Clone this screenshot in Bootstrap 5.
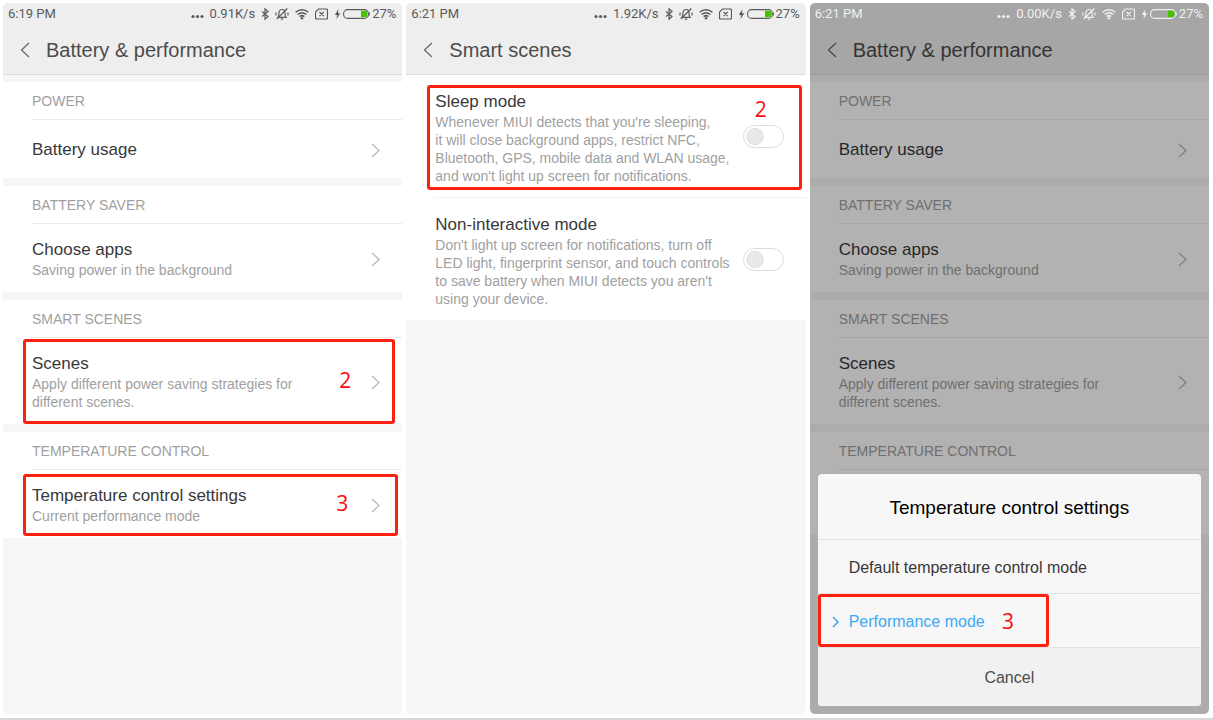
<!DOCTYPE html>
<html lang="en">
<head>
<meta charset="utf-8">
<meta name="viewport" content="width=device-width, initial-scale=1">
<title>Battery &amp; performance</title>
<link rel="stylesheet" href="https://cdn.jsdelivr.net/npm/bootstrap@5.3.0/dist/css/bootstrap.min.css">
<style>
body { font-family: "Liberation Sans", Arial, sans-serif; font-size: 14px; line-height: 18px; color: #9f9f9f; background: #fff; }
.screens { padding: 3px 4px 4px 3px; }
.page-edge { height: 2px; background: #d9d9d9; }
.phone { flex: 1 1 0; min-width: 0; background: #f6f6f6; border-radius: 5px; overflow: hidden; }
.topbar { background: #eee; border-bottom: 1px solid #dcdcdc; height: 72px; }
.statusbar { font-family: Roboto, sans-serif; font-size: 13px; line-height: 22px; color: #5a5a5a; padding: 0 6px 0 5px; }
.status-icons { gap: 6px; }
.status-icons svg { display: block; }
.charge { gap: 2px; }
.titlebar { padding: 11px 0 0 17px; }
.titlebar h1 { font-size: 20px; line-height: 28px; color: #4c4c4c; margin: 0 0 0 16px; font-weight: 400; }
.back-btn { border: 0; background: none; padding: 0; color: #6a6a6a; line-height: 0; }
.groups { padding-top: 7px; }
.group { background: #fff; margin-bottom: 8px; }
.group-label { font-size: 14px; font-weight: 400; line-height: 37px; margin: 0 0 0 28px; padding: 1px 0 0 1px; height: 38px; border-bottom: 1px solid #ebebeb; color: #9f9f9f; }
.setting { padding: 15px 22px 13px 29px; min-height: 58px; color: inherit; }
.scene { padding: 16px 22px 12px 29px; background: #fff; }
.scene-line { border-top: 1px solid #f1f1f1; margin-left: 29px; }
.item-title { font-size: 17px; line-height: 22px; color: #383838; display: block; }
.chev { color: #b9b9b9; flex: none; }
.toggle.form-check-input { width: 41px; height: 23px; margin: 0 0 4px; flex: none; border: 1px solid #dcdcdc; background-color: #fff; border-radius: 12px;
  background-image: radial-gradient(circle at 11px 50%, #e9e9e9 7px, #dcdcdc 8px, transparent 9px); background-size: 100% 100%; background-position: 0 0; }
.callout { position: absolute; border: 3px solid #fc2010; border-radius: 3px; pointer-events: none; z-index: 4;
  display: flex; justify-content: flex-end; align-items: center; color: #fb0d0d; font: 21px/28px "Open Sans", sans-serif; }
.callout-scenes { inset: 1px 7px 0 20px; padding: 0 41px 4px 0; }
.callout-temp { inset: 4px 4px 2px 20px; padding: 0 47px 4px 0; }
.callout-sleep { inset: 10px 4px 7px 21px; padding: 7px 32px 0 0; align-items: flex-start; }
.callout-perf { inset: 1px 152px 0 0; padding-right: 32px; }
.dimmed .shade { position: absolute; inset: 0; background: rgba(0,0,0,.3); z-index: 1; }
.dimmed .statusbar { position: relative; z-index: 2; color: #f0f0f0; }
.dialog { position: absolute; left: 8px; right: 8px; bottom: 8px; z-index: 3; background: #f7f7f7; border-radius: 4px; }
.dialog h2 { font-size: 19px; line-height: 24px; color: #000; font-weight: 400; margin: 0; padding: 22px 0 19px; text-align: center; }
.choice { display: block; width: 100%; border: 0; border-top: 1px solid #e3e3e3; background: none; font-size: 16px; line-height: 24px; padding: 16px 0 13px 31px; color: #383838; text-align: left; }
.choice.chosen { color: #3ea9f5; padding-left: 14px; display: flex; gap: 9px; align-items: center; }
.choice.cancel { text-align: center; padding: 18px 0 16px; background: #f1f1f1; color: #4c4c4c; border-radius: 0 0 4px 4px; }
</style>
</head>
<body>
<svg width="0" height="0" class="position-absolute" aria-hidden="true">
  <symbol id="i-right" viewBox="0 0 9 15"><path d="M1 1l7 6.500-7 6.500" fill="none" stroke="currentColor" stroke-width="1.300"/></symbol>
  <symbol id="i-left" viewBox="0 0 10 16"><path d="M9 1L1.500 8 9 15" fill="none" stroke="currentColor" stroke-width="1.300"/></symbol>
  <symbol id="i-dots" viewBox="0 0 13 12"><g fill="currentColor"><circle cx="2" cy="8.500" r="1.600"/><circle cx="6.500" cy="8.500" r="1.600"/><circle cx="11" cy="8.500" r="1.600"/></g></symbol>
  <symbol id="i-bt" viewBox="0 0 8 12"><path d="M1 3.500l6 5-3 2.700V.8L7 3.500l-6 5" fill="none" stroke="currentColor" stroke-width="1.200"/></symbol>
  <symbol id="i-mute" viewBox="0 0 14 12"><g fill="none" stroke="currentColor" stroke-width="1.200"><path d="M3 9.300h8c-1-1-1-2-1-4.300C10 3 9 1.500 7 1.500S4 3 4 5c0 2.300 0 3.300-1 4.300zM5.800 11.200h2.400M12.300 .5L1.800 11.200M1 4.500v3M13 4.500v3"/></g></symbol>
  <symbol id="i-wifi" viewBox="0 0 14 12"><g fill="none" stroke="currentColor" stroke-width="1.500"><path d="M.6 4.300c3.700-3.300 9.100-3.300 12.800 0M2.700 6.500c2.500-2.200 6.100-2.200 8.600 0M4.700 8.600c1.400-1.200 3.200-1.200 4.600 0"/></g><circle cx="7" cy="10.300" r="1.200" fill="currentColor"/></symbol>
  <symbol id="i-sim" viewBox="0 0 13 12"><path d="M3.500 1h8q1 0 1 1v8q0 1-1 1h-10q-1 0-1-1V4zM4.500 4l4.200 4.200M8.700 4L4.500 8.200" fill="none" stroke="currentColor" stroke-width="1.200"/></symbol>
  <symbol id="i-bolt" viewBox="0 0 7 12"><path d="M4.500 1L.8 6.900h2.500L2.300 11.200 6.300 5.200H3.900z" fill="currentColor"/></symbol>
  <symbol id="i-batt" viewBox="0 0 27 12"><rect x=".6" y="1.600" width="24.800" height="8.800" rx="4" fill="none" stroke="currentColor" stroke-width="1.100"/><path d="M26.400 4.500v3" stroke="currentColor"/><path d="M18 2.800h4q2.500 0 2.500 3.200t-2.500 3.200h-4z" fill="#46c300"/></symbol>
</svg>

<div class="min-vh-100 d-flex flex-column">
<main class="screens d-flex gap-1 flex-grow-1">

  <section class="phone position-relative">
    <header class="topbar">
      <div class="statusbar d-flex justify-content-between">
        <span>6:19 PM</span>
        <div class="status-icons d-flex align-items-center">
          <svg width="13" height="12"><use href="#i-dots"/></svg><span>0.91K/s</span>
          <svg width="8" height="12"><use href="#i-bt"/></svg>
          <svg width="14" height="12"><use href="#i-mute"/></svg>
          <svg width="14" height="12"><use href="#i-wifi"/></svg>
          <svg width="13" height="12"><use href="#i-sim"/></svg>
          <div class="charge d-flex align-items-center"><svg width="7" height="12"><use href="#i-bolt"/></svg><svg width="27" height="12"><use href="#i-batt"/></svg><span>27%</span></div>
        </div>
      </div>
      <div class="titlebar d-flex align-items-center">
        <button class="back-btn" aria-label="Back"><svg width="10" height="16"><use href="#i-left"/></svg></button>
        <h1>Battery &amp; performance</h1>
      </div>
    </header>
    <div class="groups">
      <div class="group">
        <h2 class="group-label">POWER</h2>
        <a href="#" class="setting d-flex align-items-center justify-content-between text-decoration-none"><span class="item-title">Battery usage</span><svg class="chev" width="9" height="15"><use href="#i-right"/></svg></a>
      </div>
      <div class="group">
        <h2 class="group-label">BATTERY SAVER</h2>
        <a href="#" class="setting d-flex align-items-center justify-content-between text-decoration-none"><span><span class="item-title">Choose apps</span>Saving power in the background</span><svg class="chev" width="9" height="15"><use href="#i-right"/></svg></a>
      </div>
      <div class="group">
        <h2 class="group-label">SMART SCENES</h2>
        <a href="#" class="setting position-relative d-flex align-items-center justify-content-between text-decoration-none"><span><span class="item-title">Scenes</span>Apply different power saving strategies for<br>different scenes.</span><svg class="chev" width="9" height="15"><use href="#i-right"/></svg><span class="callout callout-scenes">2</span></a>
      </div>
      <div class="group">
        <h2 class="group-label">TEMPERATURE CONTROL</h2>
        <a href="#" class="setting position-relative d-flex align-items-center justify-content-between text-decoration-none"><span><span class="item-title">Temperature control settings</span>Current performance mode</span><svg class="chev" width="9" height="15"><use href="#i-right"/></svg><span class="callout callout-temp">3</span></a>
      </div>
    </div>
  </section>

  <section class="phone position-relative">
    <header class="topbar">
      <div class="statusbar d-flex justify-content-between">
        <span>6:21 PM</span>
        <div class="status-icons d-flex align-items-center">
          <svg width="13" height="12"><use href="#i-dots"/></svg><span>1.92K/s</span>
          <svg width="8" height="12"><use href="#i-bt"/></svg>
          <svg width="14" height="12"><use href="#i-mute"/></svg>
          <svg width="14" height="12"><use href="#i-wifi"/></svg>
          <svg width="13" height="12"><use href="#i-sim"/></svg>
          <div class="charge d-flex align-items-center"><svg width="7" height="12"><use href="#i-bolt"/></svg><svg width="27" height="12"><use href="#i-batt"/></svg><span>27%</span></div>
        </div>
      </div>
      <div class="titlebar d-flex align-items-center">
        <button class="back-btn" aria-label="Back"><svg width="10" height="16"><use href="#i-left"/></svg></button>
        <h1>Smart scenes</h1>
      </div>
    </header>
    <div class="bg-white">
      <div class="scene position-relative d-flex align-items-center justify-content-between">
        <label for="sleep" class="text-nowrap"><span class="item-title">Sleep mode</span>Whenever MIUI detects that you're sleeping,<br>it will close background apps, restrict NFC,<br>Bluetooth, GPS, mobile data and WLAN usage,<br>and won't light up screen for notifications.</label>
        <input id="sleep" type="checkbox" role="switch" class="form-check-input toggle">
        <span class="callout callout-sleep">2</span>
      </div>
      <div class="scene-line"></div>
      <div class="scene d-flex align-items-center justify-content-between">
        <label for="noninter" class="text-nowrap"><span class="item-title">Non-interactive mode</span>Don't light up screen for notifications, turn off<br>LED light, fingerprint sensor, and touch controls<br>to save battery when MIUI detects you aren't<br>using your device.</label>
        <input id="noninter" type="checkbox" role="switch" class="form-check-input toggle">
      </div>
    </div>
  </section>

  <section class="phone position-relative dimmed">
    <header class="topbar">
      <div class="statusbar d-flex justify-content-between">
        <span>6:21 PM</span>
        <div class="status-icons d-flex align-items-center">
          <svg width="13" height="12"><use href="#i-dots"/></svg><span>0.00K/s</span>
          <svg width="8" height="12"><use href="#i-bt"/></svg>
          <svg width="14" height="12"><use href="#i-mute"/></svg>
          <svg width="14" height="12"><use href="#i-wifi"/></svg>
          <svg width="13" height="12"><use href="#i-sim"/></svg>
          <div class="charge d-flex align-items-center"><svg width="7" height="12"><use href="#i-bolt"/></svg><svg width="27" height="12"><use href="#i-batt"/></svg><span>27%</span></div>
        </div>
      </div>
      <div class="titlebar d-flex align-items-center">
        <button class="back-btn" aria-label="Back"><svg width="10" height="16"><use href="#i-left"/></svg></button>
        <h1>Battery &amp; performance</h1>
      </div>
    </header>
    <div class="groups">
      <div class="group">
        <h2 class="group-label">POWER</h2>
        <a href="#" class="setting d-flex align-items-center justify-content-between text-decoration-none"><span class="item-title">Battery usage</span><svg class="chev" width="9" height="15"><use href="#i-right"/></svg></a>
      </div>
      <div class="group">
        <h2 class="group-label">BATTERY SAVER</h2>
        <a href="#" class="setting d-flex align-items-center justify-content-between text-decoration-none"><span><span class="item-title">Choose apps</span>Saving power in the background</span><svg class="chev" width="9" height="15"><use href="#i-right"/></svg></a>
      </div>
      <div class="group">
        <h2 class="group-label">SMART SCENES</h2>
        <a href="#" class="setting d-flex align-items-center justify-content-between text-decoration-none"><span><span class="item-title">Scenes</span>Apply different power saving strategies for<br>different scenes.</span><svg class="chev" width="9" height="15"><use href="#i-right"/></svg></a>
      </div>
      <div class="group">
        <h2 class="group-label">TEMPERATURE CONTROL</h2>
        <div class="setting py-3"><div class="py-3"></div></div>
      </div>
    </div>
    <div class="shade"></div>
    <div class="dialog" role="dialog" aria-labelledby="dlg-title">
      <h2 id="dlg-title">Temperature control settings</h2>
      <button class="choice">Default temperature control mode</button>
      <div class="position-relative">
        <button class="choice chosen"><svg width="8" height="12" aria-hidden="true"><path d="M1 1l5 5-5 5" fill="none" stroke="currentColor" stroke-width="1.600"/></svg>Performance mode</button>
        <span class="callout callout-perf">3</span>
      </div>
      <button class="choice cancel">Cancel</button>
    </div>
  </section>

</main>
<div class="page-edge"></div>
</div>
<script src="https://cdn.jsdelivr.net/npm/bootstrap@5.3.0/dist/js/bootstrap.bundle.min.js"></script>
</body>
</html>
